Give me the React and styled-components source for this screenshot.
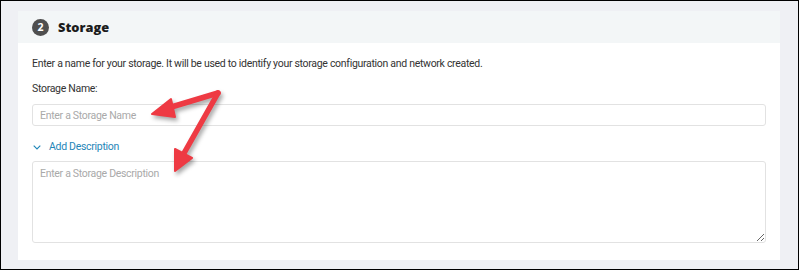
import React from 'react';
import styled, { createGlobalStyle } from 'styled-components';

const GlobalStyle = createGlobalStyle`
  body {
    margin: 0;
    background: #ffffff;
    font-family: Roboto, "Liberation Sans", Arial, sans-serif;
  }
  * { box-sizing: border-box; }
`;

const Frame = styled.div`
  position: relative;
  width: 799px;
  height: 270px;
  border: 1px solid #000;
  background: #eff0f4;
  padding: 10px 18px 0 17px;
`;

const Card = styled.section`
  width: 762px;
  height: 249px;
  background: #fff;
  display: flex;
  flex-direction: column;
`;

const Header = styled.div`
  height: 32px;
  background: #f3f6f7;
  display: flex;
  align-items: center;
  gap: 9px;
  padding-left: 14px;
`;

const Badge = styled.span`
  width: 17px;
  height: 17px;
  border-radius: 50%;
  background: #4f4f4f;
  color: #fff;
  font-family: "Open Sans", sans-serif;
  font-weight: 700;
  font-size: 10.5px;
  display: flex;
  align-items: center;
  justify-content: center;
`;

const Title = styled.h2`
  margin: 0;
  font-family: "Open Sans", sans-serif;
  font-weight: 800;
  font-size: 12.8px;
  color: #1c1c1c;
`;

const Body = styled.div`
  padding: 13px 14px 0 14px;
  display: flex;
  flex-direction: column;
  font-size: 10.5px;
  letter-spacing: -0.3px;
`;

const Intro = styled.p`
  margin: 0;
  line-height: 16px;
  color: #333;
`;

const Label = styled.label`
  margin-top: 9px;
  line-height: 16px;
  color: #333;
`;

const TextInput = styled.input`
  margin-top: 7px;
  height: 22px;
  width: 100%;
  border: 1px solid #e2e2e2;
  border-radius: 3px;
  padding: 0 7px;
  font-family: Roboto, sans-serif;
  font-size: 10.5px;
  letter-spacing: -0.3px;
  outline: none;
  &::placeholder { color: #a9a9a9; }
`;

const Toggle = styled.button`
  margin-top: 13px;
  align-self: flex-start;
  display: flex;
  align-items: center;
  gap: 8px;
  border: 0;
  background: none;
  padding: 0 0 0 1px;
  font-family: Roboto, sans-serif;
  font-size: 10.5px;
  letter-spacing: -0.3px;
  line-height: 16px;
  color: #1f86b8;
`;

const TextArea = styled.textarea`
  margin-top: 6px;
  height: 82px;
  width: 100%;
  border: 1px solid #e2e2e2;
  border-radius: 3px;
  padding: 5px 7px;
  font-family: Roboto, sans-serif;
  font-size: 10.5px;
  letter-spacing: -0.3px;
  outline: none;
  resize: vertical;
  &::placeholder { color: #a9a9a9; }
`;

const Arrows = styled.svg`
  position: absolute;
  left: -1px;
  top: -1px;
  pointer-events: none;
  filter: drop-shadow(2px 3px 2px rgba(0, 0, 0, 0.35));
`;

function Chevron() {
  return (
    <svg width="8" height="5" viewBox="0 0 8 5">
      <path d="M0.7 0.7 L4 4 L7.3 0.7" fill="none" stroke="#1f86b8" strokeWidth="1.1" />
    </svg>
  );
}

export default function App() {
  return (
    <>
      <GlobalStyle />
      <Frame>
        <Card>
          <Header>
            <Badge>2</Badge>
            <Title>Storage</Title>
          </Header>
          <Body>
            <Intro>
              Enter a name for your storage. It will be used to identify your storage configuration and network created.
            </Intro>
            <Label>Storage Name:</Label>
            <TextInput placeholder="Enter a Storage Name" />
            <Toggle>
              <Chevron />
              Add Description
            </Toggle>
            <TextArea placeholder="Enter a Storage Description" />
          </Body>
        </Card>
        <Arrows width="799" height="270" viewBox="0 0 799 270">
          <g fill="#ee3a43" stroke="#ee3a43" strokeLinejoin="round" strokeLinecap="round">
            <line x1="218" y1="93" x2="168" y2="108" strokeWidth="5.5" />
            <polygon points="152,114 171,99 175,117" strokeWidth="2" />
            <line x1="218" y1="93" x2="183" y2="155" strokeWidth="5.5" />
            <polygon points="175,171 175,149 192,158" strokeWidth="2" />
          </g>
        </Arrows>
      </Frame>
    </>
  );
}
